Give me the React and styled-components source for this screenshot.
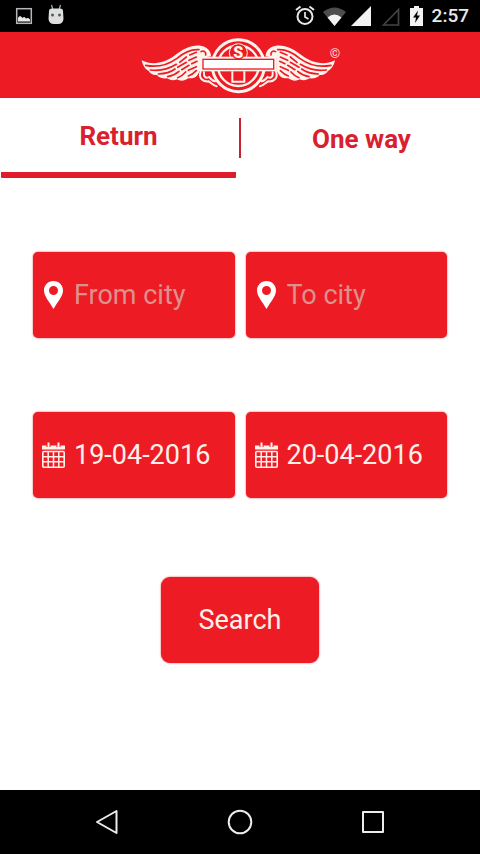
import React, { useState } from 'react';
import styled, { createGlobalStyle } from 'styled-components';

const GlobalStyle = createGlobalStyle`
  body {
    margin: 0;
    background: #fff;
  }

  * {
    box-sizing: border-box;
  }

  button,
  input {
    font-family: Roboto, sans-serif;
  }
`;

const Screen = styled.div`
  display: flex;
  flex-direction: column;
  min-height: 100vh;
  font-family: Roboto, sans-serif;
`;

const StatusBar = styled.div`
  display: flex;
  justify-content: space-between;
  align-items: center;
  height: 32px;
  padding: 0 11px 0 14px;
  background: #000;
  color: #e8e8e8;
`;

const StatusGroup = styled.div`
  display: flex;
  align-items: center;
  gap: ${(props) => props.$gap}px;

  svg {
    display: block;
    overflow: visible;
  }
`;

const Clock = styled.span`
  font-size: 19px;
  line-height: 32px;
  font-weight: 500;
`;

const Header = styled.header`
  display: flex;
  justify-content: center;
  align-items: center;
  height: 66px;
  background: #ed1c24;
`;

const Tabs = styled.div`
  display: grid;
  grid-template-columns: minmax(0, 1fr) 2px minmax(0, 1fr);
  column-gap: 3px;
  align-items: center;
  padding: 0 1px;
`;

const Tab = styled.button`
  height: 80px;
  padding: 2px 0 0;
  border: 0;
  border-bottom: ${(props) => (props.$active ? '6px solid #df1c2a' : '0')};
  border-radius: 1px;
  background: none;
  color: #d9202e;
  font-size: 26px;
  font-weight: 700;
  cursor: pointer;
`;

const Divider = styled.span`
  height: 40px;
  background: #c9202e;
`;

const Form = styled.form`
  flex: 1;
  display: flex;
  flex-direction: column;
  gap: 74px;
  padding: 74px 33px;
`;

const FieldRow = styled.div`
  display: grid;
  grid-template-columns: repeat(2, minmax(0, 1fr));
  gap: 11px;
`;

const Field = styled.label`
  display: flex;
  align-items: center;
  gap: 7px;
  height: 86px;
  padding: 0 8px;
  border-radius: 5px;
  background: #ed1c24;
  box-shadow: 0 0 2px #d9484d;
`;

const FieldIcon = styled.svg`
  flex: none;
  width: 26px;
  height: 30px;
`;

const FieldInput = styled.input`
  flex: 1;
  width: 100%;
  min-width: 0;
  padding: 0;
  border: 0;
  outline: 0;
  background: none;
  color: #fff0ea;
  font-size: 27px;
  line-height: 32px;

  &::placeholder {
    color: #dc918c;
    opacity: 1;
  }
`;

const SearchButton = styled.button`
  align-self: center;
  height: 86px;
  margin-top: 5px;
  padding: 0 38px;
  border: 0;
  border-radius: 9px;
  background: #ed1c24;
  box-shadow: 0 0 2px #d9484d;
  color: #fff0ea;
  font-size: 27px;
  cursor: pointer;
`;

const NavBar = styled.nav`
  display: flex;
  justify-content: center;
  gap: 93px;
  height: 64px;
  background: #000;
`;

const NavButton = styled.button`
  display: flex;
  align-items: center;
  justify-content: center;
  width: 40px;
  padding: 0;
  border: 0;
  background: none;
  cursor: pointer;
`;

const Wing = () => (
  <g>
    <path
      d="M20 82 C52 98 88 90 116 70 C142 49 168 35 197 38 C216 41 229 54 228 70 L196 76 V112 L186 128 C177 137 168 136 160 136 C148 144 138 146 126 139 C114 144 104 141 96 136 C82 137 70 133 66 126 C54 127 44 121 41 114 C29 108 22 94 20 82 Z"
      fill="#fff3ee"
    />
    <g fill="none" stroke="#ed1c24" strokeWidth="5" strokeLinecap="round">
      <path d="M32 97 C66 104 98 96 126 76 C146 59 170 48 192 50" />
      <path d="M46 111 C78 116 104 106 124 94" />
      <path d="M134 88 L154 72 M164 66 L184 58" />
      <path d="M70 123 C92 122 106 118 120 108" />
      <path d="M128 103 L154 88 M162 82 L184 72" />
      <path d="M98 131 C114 128 124 122 132 115" />
      <path d="M140 110 L162 97 M170 92 L186 85" />
      <path d="M128 134 C140 130 146 124 152 117" />
      <path d="M160 112 L184 101" />
      <path d="M160 129 C170 126 176 121 184 113" />
      <path d="M198 56 C206 51 214 57 212 66" />
    </g>
  </g>
);

const Scroll = () => (
  <g fill="none" stroke="#fff3ee" strokeWidth="6" strokeLinecap="round">
    <path d="M197 116 C190 134 202 147 221 145 C230 151 236 158 245 160" />
    <path d="M207 118 C205 132 213 137 222 132 C228 139 234 144 240 145" />
  </g>
);

const Logo = () => (
  <svg width="210" height="64" viewBox="0 0 630 192" role="img" aria-label="Winged emblem">
    <Wing />
    <g transform="translate(620 0) scale(-1 1)">
      <Wing />
    </g>
    <circle cx="310" cy="98" r="78" fill="#ed1c24" stroke="#fff3ee" strokeWidth="9" />
    <circle cx="310" cy="98" r="61" fill="none" stroke="#fff3ee" strokeWidth="7" />
    <Scroll />
    <g transform="translate(620 0) scale(-1 1)">
      <Scroll />
    </g>
    <circle cx="310" cy="59" r="27" fill="#ed1c24" stroke="#fff3ee" strokeWidth="3" />
    <rect x="195" y="71" width="230" height="44" fill="#fff3ee" />
    <rect x="204" y="79" width="212" height="29" fill="#fff" stroke="#ed1c24" strokeWidth="4" />
    <text
      x="310"
      y="75"
      textAnchor="middle"
      fontFamily="Roboto, sans-serif"
      fontWeight="900"
      fontSize="48"
      fill="#fff3ee"
      stroke="#ed1c24"
      strokeWidth="8"
      paintOrder="stroke"
    >
      S
    </text>
    <path d="M292 115 V146 H328 V115" fill="none" stroke="#fff3ee" strokeWidth="6" />
    <text x="600" y="76" textAnchor="middle" fontFamily="Roboto, sans-serif" fontSize="40" fill="#ffd9d2">©</text>
  </svg>
);

const PinIcon = () => (
  <FieldIcon viewBox="0 0 26 30" aria-hidden="true">
    <path
      fillRule="evenodd"
      fill="#fff"
      d="M12.500 1 C7 1 3 5.200 3 10.400 C3 16 8 21 12.500 29 C17 21 22 16 22 10.400 C22 5.200 18 1 12.500 1 Z M12.500 6 A4.500 4.500 0 1 1 12.500 15 A4.500 4.500 0 1 1 12.500 6 Z"
    />
  </FieldIcon>
);

const CalendarIcon = () => (
  <FieldIcon viewBox="0 0 26 30" fill="none" aria-hidden="true">
    <path d="M1 5.500 H24 V9.500 H1 Z" fill="#fff0ea" />
    <path d="M7.500 2.500 V7 M17.500 2.500 V7" stroke="#ed1c24" strokeWidth="4" />
    <path d="M7.500 2.500 V7 M17.500 2.500 V7" stroke="#fff0ea" strokeWidth="2" />
    <rect x="1.800" y="11.500" width="21.400" height="15.700" rx="1" stroke="#fff0ea" strokeWidth="1.600" />
    <path d="M7.200 11.500 V27 M12.500 11.500 V27 M17.800 11.500 V27 M2 16.700 H23 M2 21.800 H23" stroke="#fff0ea" strokeWidth="1.500" />
  </FieldIcon>
);

const App = () => {
  const [trip, setTrip] = useState('return');

  return (
    <Screen>
      <GlobalStyle />
      <StatusBar>
        <StatusGroup $gap={14}>
          <svg width="20" height="20" viewBox="0 0 20 20" aria-hidden="true">
            <rect x="2.700" y="2.700" width="14.600" height="14.600" fill="none" stroke="#b9b4bb" strokeWidth="1.500" />
            <path d="M4 15.500 V12 C5 9.500 7 9.500 8.500 12 C10 10.500 11 11 12 12.500 C13.500 11.500 15 12 16 13.500 V15.500 Z" fill="#e8e8e8" />
          </svg>
          <svg width="16" height="22" viewBox="0 0 16 22" aria-hidden="true">
            <path d="M3.500 0 L5 5 M12.500 0 L11 5" stroke="#aaa" strokeWidth="1.300" />
            <path d="M1 6 Q1 3.500 4 3.500 H12 Q15 3.500 15 6 L15.500 14 Q15 19 10 19 H6 Q1 19 0.500 14 Z" fill="#dedede" />
            <circle cx="4.500" cy="10" r="1.500" fill="#4b6257" />
            <circle cx="11.500" cy="10" r="1.500" fill="#4b6257" />
          </svg>
        </StatusGroup>
        <StatusGroup $gap={6}>
          <svg width="22" height="22" viewBox="0 0 22 22" fill="none" stroke="#e8e8e8" aria-hidden="true">
            <circle cx="11" cy="11.500" r="7.500" strokeWidth="2" />
            <path d="M2 5 L6.500 1.500 M20 5 L15.500 1.500" strokeWidth="2" />
            <path d="M11 7 V12 L14.500 14" strokeWidth="1.700" />
          </svg>
          <svg width="22" height="20" viewBox="0 0 22 20" aria-hidden="true">
            <path d="M1 6 Q12.500 -3 24 6 L12.500 20 Z" fill="#4d4d4d" />
            <path d="M5.500 11.500 Q12.500 5.500 19.500 11.500 L12.500 20 Z" fill="#f2f2f2" />
          </svg>
          <svg width="24" height="20" viewBox="0 0 24 20" aria-hidden="true">
            <path d="M1 20 L21 0 V20 Z" fill="#f2f2f2" />
          </svg>
          <svg width="24" height="20" viewBox="0 0 24 20" aria-hidden="true">
            <path d="M3.500 19 L18.500 3.500 V19 Z" fill="none" stroke="#444" strokeWidth="1.700" />
          </svg>
          <svg width="16" height="20" viewBox="0 0 16 20" aria-hidden="true">
            <path d="M0 2 H4 V0 H9 V2 H13 V20 H0 Z" fill="#f2f2f2" />
            <path d="M8 4.500 L3 11.500 H6 L5 17 L10 9.500 H7 Z" fill="#000" />
          </svg>
          <Clock>2:57</Clock>
        </StatusGroup>
      </StatusBar>
      <Header>
        <Logo />
      </Header>
      <Tabs>
        <Tab type="button" $active={trip === 'return'} onClick={() => setTrip('return')}>
          Return
        </Tab>
        <Divider />
        <Tab type="button" $active={trip === 'oneway'} onClick={() => setTrip('oneway')}>
          One way
        </Tab>
      </Tabs>
      <Form onSubmit={(e) => e.preventDefault()}>
        <FieldRow>
          <Field>
            <PinIcon />
            <FieldInput type="text" placeholder="From city" aria-label="From city" />
          </Field>
          <Field>
            <PinIcon />
            <FieldInput type="text" placeholder="To city" aria-label="To city" />
          </Field>
        </FieldRow>
        <FieldRow>
          <Field>
            <CalendarIcon />
            <FieldInput type="text" defaultValue="19-04-2016" aria-label="Departure date" />
          </Field>
          <Field>
            <CalendarIcon />
            <FieldInput type="text" defaultValue="20-04-2016" aria-label="Return date" />
          </Field>
        </FieldRow>
        <SearchButton type="submit">Search</SearchButton>
      </Form>
      <NavBar>
        <NavButton type="button" aria-label="Back">
          <svg width="26" height="26" viewBox="0 0 26 26" fill="none" stroke="#ececec" strokeWidth="2" strokeLinejoin="round">
            <path d="M3 13 L22.500 2 V24 Z" />
          </svg>
        </NavButton>
        <NavButton type="button" aria-label="Home">
          <svg width="26" height="26" viewBox="0 0 26 26" fill="none" stroke="#ececec" strokeWidth="2">
            <circle cx="13" cy="13" r="11.300" />
          </svg>
        </NavButton>
        <NavButton type="button" aria-label="Recent apps">
          <svg width="26" height="26" viewBox="0 0 26 26" fill="none" stroke="#ececec" strokeWidth="2" strokeLinejoin="round">
            <rect x="3" y="3" width="20" height="20" />
          </svg>
        </NavButton>
      </NavBar>
    </Screen>
  );
};

export default App;
